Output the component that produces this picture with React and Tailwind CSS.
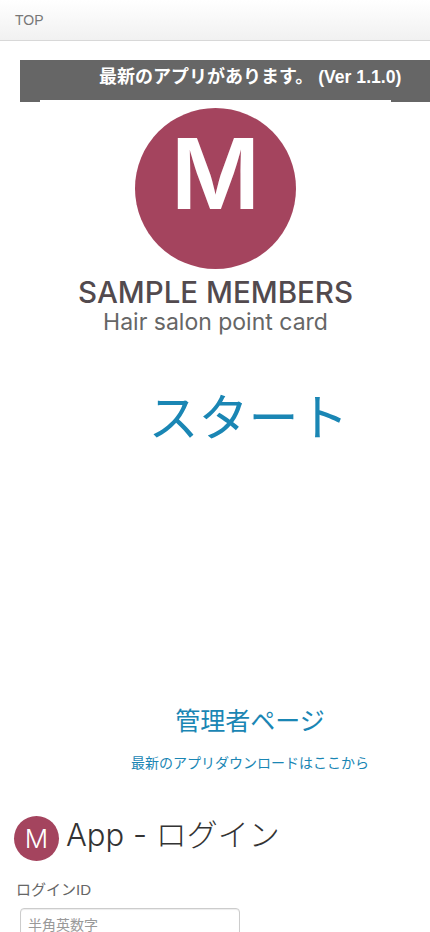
const fontStack = "font-['Liberation_Sans','Noto_Sans_CJK_JP',sans-serif]";
const interStack = "font-['Inter','Noto_Sans_CJK_JP',sans-serif]";

function App() {
  return (
    <div className={`h-[932px] overflow-hidden bg-white ${fontStack}`}>
      {/* nav */}
      <div className="h-[41px] flex items-center px-[15px] bg-gradient-to-b from-white to-[#f1f1f1] border-b border-[#d8d8d8]">
        <span className="text-[14px] text-[#777]">TOP</span>
      </div>

      {/* update notice */}
      <div className="mt-[19px] ml-5 h-[42px] bg-[#666] pl-[79px] pt-[5px]">
        <p className="text-white font-bold text-[18px] leading-[24px] whitespace-nowrap">
          最新のアプリがあります。 <span className="text-[17.6px]">(Ver 1.1.0)</span>
        </p>
      </div>

      {/* logo + links */}
      <div className={`relative -mt-[2px] mx-10 w-[351px] bg-white pt-2 flex flex-col items-center ${interStack}`}>
        <div className="w-[161px] h-[161px] pb-[30px] rounded-full bg-[#a4445e] flex items-center justify-center text-white text-[97px] font-semibold leading-none">
          M
        </div>
        <h1 className="mt-[5px] text-[29.5px] leading-[36px] font-medium text-[#524a4e] whitespace-nowrap">SAMPLE MEMBERS</h1>
        <p className="text-[23px] leading-[24px] text-[#666] whitespace-nowrap">Hair salon point card</p>
      </div>

      <div className="pl-[67px] flex flex-col items-center">
        <a className="mt-[50px] text-[50px] leading-[70px] text-[#1a86b4]">スタート</a>
        <a className="mt-[249px] ml-[3px] text-[25px] leading-[36px] text-[#1a86b4]">管理者ページ</a>
        <a className="mt-[14px] ml-[3px] text-[14px] leading-[20px] text-[#1a86b4]">最新のアプリダウンロードはここから</a>
      </div>

      {/* login */}
      <div className="mt-[40px] pl-[14px] flex items-start gap-[7px]">
        <div className={`mt-[3px] w-[45px] h-[45px] rounded-full bg-[#a4445e] flex items-center justify-center text-white text-[26px] font-light leading-none ${interStack}`}>
          M
        </div>
        <h2 className={`text-[31px] leading-[44px] font-light text-[#333] ${interStack}`}>App - ログイン</h2>
      </div>
      <label className="block mt-[18px] ml-4 text-[15px] leading-[22px] text-[#666]">ログインID</label>
      <input
        type="text"
        placeholder="半角英数字"
        className="block mt-[7px] ml-5 w-[220px] h-[34px] px-[7px] text-[14px] border border-[#ccc] rounded placeholder:text-[#999] shadow-[inset_0_1px_1px_rgba(0,0,0,0.075)]"
      />
    </div>
  );
}

export default App;
